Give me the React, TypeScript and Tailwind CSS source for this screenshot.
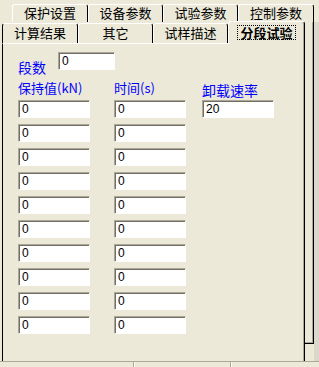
const cjk = "font-['SimSun','Noto_Sans_CJK_SC','Noto_Sans',sans-serif]"

const backTabs = ['保护设置', '设备参数', '试验参数', '控制参数']
const frontTabs = ['计算结果', '其它', '试样描述']

function Box({ value, w = 'w-[72px]' }: { value: string; w?: string }) {
  return (
    <div
      className={`${w} h-[18px] bg-white border border-t-[#ACA899] border-l-[#ACA899] border-b-white border-r-white shadow-[inset_1px_1px_0_#716F64] pl-[3px] text-[12px] leading-[16px] text-black font-['Liberation_Sans',sans-serif]`}
    >
      {value}
    </div>
  )
}

export default function App() {
  const rows = Array.from({ length: 10 }, (_, i) => i)
  return (
    <div className={`w-[319px] h-[367px] bg-[#ECE9D8] overflow-hidden flex flex-col ${cjk}`}>
      {/* back tab row */}
      <div className="h-[22px] flex pl-[12px] pt-[4px] shrink-0">
        {backTabs.map((t, i) => (
          <div
            key={t}
            className={`${i === 0 || i === 3 ? 'w-[76px]' : 'w-[75px]'} h-[18px] border-t border-l border-white border-r border-r-black rounded-t-[3px] text-center text-[13px] leading-[16px] text-black`}
          >
            {t}
          </div>
        ))}
      </div>

      <div className="flex h-[339px] shrink-0">
        <div className="w-[2px]" />
        <div className="w-[303px] flex flex-col">
          {/* front tab row */}
          <div className="h-[21px] flex items-end shrink-0">
            {frontTabs.map((t, i) => (
              <div
                key={t}
                className={`${i === 0 ? 'w-[76px] border-l-black' : 'w-[75px] border-l-white'} h-[20px] border-t border-l border-t-white border-r border-r-black rounded-t-[3px] text-center text-[13px] leading-[18px] text-black`}
              >
                {t}
              </div>
            ))}
            <div className="relative z-10 w-[77px] h-[23px] -mb-[1px] bg-[#ECE9D8] border-t border-l border-white border-r border-r-black shadow-[inset_-1px_0_0_#ACA899] rounded-t-[3px] flex items-start justify-center pt-[4px]">
              <span className="px-[2px] outline outline-1 outline-dotted outline-black text-[13px] leading-[13px] font-bold text-black">
                分段试验
              </span>
            </div>
          </div>

          {/* page */}
          <div className="flex-1 border-t border-t-white border-l border-l-black border-r border-r-black shadow-[inset_-1px_0_0_#ACA899] pl-[15px] pt-[8px]">
            <div className="flex items-start h-[18px]">
              <span className="w-[40px] mt-[8px] text-[14px] leading-[14px] text-[#0000FF]">段数</span>
              <Box value="0" w="w-[57px]" />
            </div>

            <div className="flex mt-[12px]">
              <div className="w-[72px] flex flex-col gap-[6px]">
                <div className="h-[12px] text-[13px] leading-[12px] text-[#0000FF] whitespace-nowrap">保持值(kN)</div>
                {rows.map(i => (
                  <Box key={i} value="0" />
                ))}
              </div>
              <div className="w-[72px] ml-[24px] flex flex-col gap-[6px]">
                <div className="h-[12px] text-[13px] leading-[12px] text-[#0000FF] whitespace-nowrap">时间(s)</div>
                {rows.map(i => (
                  <Box key={i} value="0" />
                ))}
              </div>
              <div className="w-[72px] ml-[16px] flex flex-col gap-[6px]">
                <div className="h-[12px] mt-[2px] -mb-[2px] text-[14px] leading-[12px] text-[#0000FF] whitespace-nowrap">卸载速率</div>
                <Box value="20" />
              </div>
            </div>
          </div>
        </div>

        <div className="w-[9px] h-[322px] border-r border-r-black border-b border-b-black shadow-[inset_-1px_-1px_0_#ACA899]" />
        <div className="w-[5px] bg-[#DAD7CB]" />
      </div>

      {/* status strip */}
      <div className="flex-1 flex border-t border-t-[#ACA899]">
        <div className="w-[133px]" />
        <div className="w-[97px] border-l border-l-[#ACA899] shadow-[inset_1px_0_0_#fff]" />
        <div className="flex-1 border-l border-l-[#ACA899] shadow-[inset_1px_0_0_#fff]" />
      </div>
    </div>
  )
}
